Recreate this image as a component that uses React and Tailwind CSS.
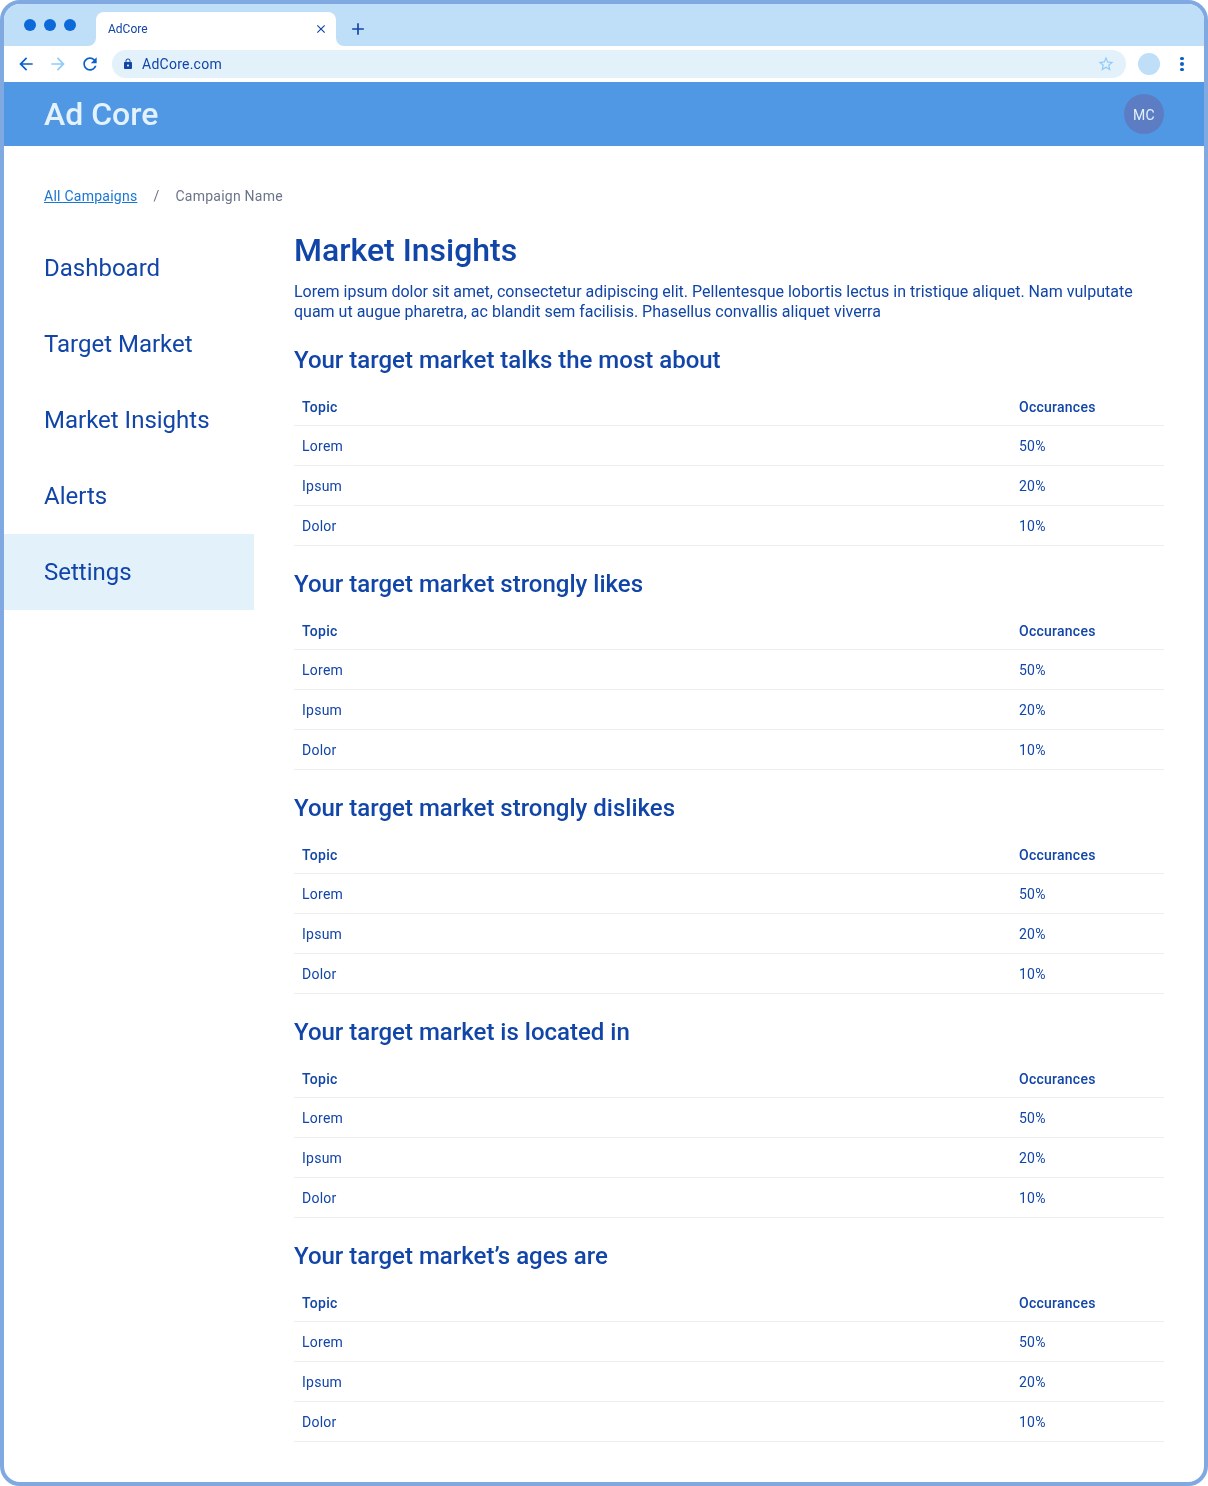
const navItems = ['Dashboard', 'Target Market', 'Market Insights', 'Alerts', 'Settings'];

const sections = [
  'Your target market talks the most about',
  'Your target market strongly likes',
  'Your target market strongly dislikes',
  'Your target market is located in',
  'Your target market’s ages are',
];

const rows = [
  ['Lorem', '50%'],
  ['Ipsum', '20%'],
  ['Dolor', '10%'],
];

const Icon = ({ d, className }) => (
  <svg viewBox="0 0 24 24" fill="currentColor" className={className}>
    <path d={d} />
  </svg>
);

const ARROW_BACK = 'M20 11H7.83l5.59-5.59L12 4l-8 8 8 8 1.41-1.41L7.83 13H20v-2z';
const ARROW_FORWARD = 'M12 4l-1.41 1.41L16.17 11H4v2h12.17l-5.58 5.59L12 20l8-8z';
const REFRESH =
  'M17.65 6.35C16.2 4.9 14.21 4 12 4c-4.42 0-7.99 3.58-7.99 8s3.57 8 7.99 8c3.73 0 6.84-2.55 7.73-6h-2.08c-.82 2.33-3.04 4-5.65 4-3.31 0-6-2.69-6-6s2.69-6 6-6c1.66 0 3.14.69 4.22 1.78L13 11h7V4l-2.35 2.35z';
const LOCK =
  'M18 8h-1V6c0-2.76-2.24-5-5-5S7 3.24 7 6v2H6c-1.1 0-2 .9-2 2v10c0 1.1.9 2 2 2h12c1.1 0 2-.9 2-2V10c0-1.1-.9-2-2-2zm-6 9c-1.1 0-2-.9-2-2s.9-2 2-2 2 .9 2 2-.9 2-2 2zm3.1-9H8.9V6c0-1.71 1.39-3.1 3.1-3.1 1.71 0 3.1 1.39 3.1 3.1v2z';
const STAR =
  'M22 9.24l-7.19-.62L12 2 9.19 8.63 2 9.24l5.46 4.73L5.82 21 12 17.27 18.18 21l-1.63-7.03L22 9.24zM12 15.4l-3.76 2.27 1-4.28-3.32-2.88 4.38-.38L12 6.1l1.71 4.04 4.38.38-3.32 2.88 1 4.28L12 15.4z';
const CLOSE = 'M19 6.41L17.59 5 12 10.59 6.41 5 5 6.41 10.59 12 5 17.59 6.41 19 12 13.41 17.59 19 19 17.59 13.41 12z';
const ADD = 'M19 13h-6v6h-2v-6H5v-2h6V5h2v6h6v2z';

const BrowserChrome = () => (
  <>
    {/* Tab strip */}
    <div className="flex h-[42px] shrink-0 items-end bg-[#bfdff9]">
      <div className="flex h-[42px] w-[92px] items-start gap-2 pl-5 pt-[15px]">
        <span className="size-3 rounded-full bg-[#0b69d9]" />
        <span className="size-3 rounded-full bg-[#0b69d9]" />
        <span className="size-3 rounded-full bg-[#0b69d9]" />
      </div>
      <div className="relative flex h-[34px] w-60 items-center justify-between rounded-t-lg bg-white pl-3 pr-2">
        <span className="absolute -left-2 bottom-0 size-2 bg-white">
          <span className="block size-2 rounded-br-lg bg-[#bfdff9]" />
        </span>
        <span className="text-xs text-[#1145a8]">AdCore</span>
        <Icon d={CLOSE} className="size-3.5 text-[#1145a8]" />
        <span className="absolute -right-2 bottom-0 size-2 bg-white">
          <span className="block size-2 rounded-bl-lg bg-[#bfdff9]" />
        </span>
      </div>
      <Icon d={ADD} className="mb-[7px] ml-[12px] size-5 text-[#1145a8]" />
    </div>

    {/* Toolbar */}
    <div className="flex h-9 shrink-0 items-center bg-white">
      <Icon d={ARROW_BACK} className="ml-3 size-5 text-[#0b5fc9]" />
      <Icon d={ARROW_FORWARD} className="ml-3 size-5 text-[#90caf9]" />
      <Icon d={REFRESH} className="ml-3 size-5 text-[#0b5fc9]" />
      <div className="ml-3 flex h-7 w-[1014px] items-center rounded-full bg-[#e3f1fb] pl-[10px] pr-[11px]">
        <Icon d={LOCK} className="size-3 text-[#1145a8]" />
        <span className="ml-2 text-sm tracking-[0.25px] text-[#1145a8]">AdCore.com</span>
        <Icon d={STAR} className="ml-auto size-[18px] text-[#90caf9]" />
      </div>
      <span className="ml-3 size-[22px] rounded-full bg-[#bfdff9]" />
      <div className="ml-5 flex flex-col gap-[2px]">
        <span className="size-[3.5px] rounded-full bg-[#0b5fc9]" />
        <span className="size-[3.5px] rounded-full bg-[#0b5fc9]" />
        <span className="size-[3.5px] rounded-full bg-[#0b5fc9]" />
      </div>
    </div>
  </>
);

const InsightTable = () => (
  <table className="w-full table-fixed border-separate border-spacing-0 text-sm tracking-[0.25px] text-[#1145a8]">
    <thead>
      <tr className="h-10">
        <th className="w-[717px] border-b border-[#eeeeee] px-2 pt-[2px] text-left font-medium">Topic</th>
        <th className="border-b border-[#eeeeee] px-2 pt-[2px] text-left font-medium">Occurances</th>
      </tr>
    </thead>
    <tbody>
      {rows.map(([topic, share]) => (
        <tr key={topic} className="h-10">
          <td className="border-b border-[#eeeeee] px-2">{topic}</td>
          <td className="border-b border-[#eeeeee] px-2">{share}</td>
        </tr>
      ))}
    </tbody>
  </table>
);

export default function App() {
  return (
    <div className="h-[1486px] w-[1208px] font-['Roboto',sans-serif] will-change-transform">
      <div className="flex h-full flex-col overflow-hidden rounded-[20px] border-4 border-[#7fa9e0]">
        <BrowserChrome />

        {/* App header */}
        <header className="flex h-16 shrink-0 items-center justify-between bg-[#5097e4] pl-10 pr-10">
          <span className="text-[32px] font-medium leading-10 text-[#e3f2fd]">Ad Core</span>
          <span className="flex size-10 items-center justify-center rounded-full bg-[#5c7dc4] pt-px text-sm tracking-[0.25px] text-[#e3f2fd]">
            MC
          </span>
        </header>

        {/* Breadcrumb */}
        <nav className="mt-10 flex h-5 items-center pl-10 text-sm tracking-[0.25px]">
          <a className="text-[#1976d2] underline">All Campaigns</a>
          <span className="ml-4 text-[#6b7488]">/</span>
          <span className="ml-4 text-[#6b7488]">Campaign Name</span>
        </nav>

        <div className="mt-6 flex">
          {/* Sidebar */}
          <aside className="w-[250px] shrink-0">
            {navItems.map((item) => (
              <div
                key={item}
                className={`flex h-[76px] items-center pl-10 text-2xl text-[#1145a8] ${
                  item === 'Settings' ? 'bg-[#e3f1fb]' : ''
                }`}
              >
                {item}
              </div>
            ))}
          </aside>

          {/* Main content */}
          <main className="ml-10 w-[870px]">
            <h1 className="mb-3 text-[32px] font-medium leading-10 text-[#1145a8]">Market Insights</h1>
            <p className="mb-6 text-base leading-5 text-[#1145a8]">
              Lorem ipsum dolor sit amet, consectetur adipiscing elit. Pellentesque lobortis lectus in tristique
              aliquet. Nam vulputate quam ut augue pharetra, ac blandit sem facilisis. Phasellus convallis aliquet
              viverra
            </p>
            {sections.map((title) => (
              <section key={title} className="mb-6">
                <h2 className="mb-3 text-2xl font-medium leading-7 text-[#1145a8]">{title}</h2>
                <InsightTable />
              </section>
            ))}
          </main>
        </div>
      </div>
    </div>
  );
}
